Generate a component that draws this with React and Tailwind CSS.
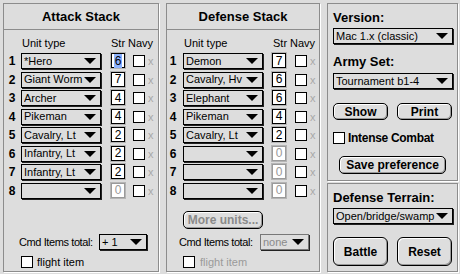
import React from 'react';

const Arrow = () => (
  <svg width="12" height="6" viewBox="0 0 12 6" className="shrink-0">
    <polygon points="0,0 12,0 6,6" fill="#000" />
  </svg>
);

const Popup = ({ label, className = '', disabled }) => (
  <div
    className={`flex items-center h-[16px] border bg-[#dddddd] shadow-[1px_1px_0_#222] pl-[2px] pr-[4px] ${
      disabled ? 'border-[#777] text-[#8a8a8a]' : 'border-black text-black'
    } ${className}`}
  >
    <span className="flex-1 whitespace-nowrap overflow-hidden text-[11px] leading-none">{label}</span>
    <Arrow />
  </div>
);

const Check = ({ className = '' }) => (
  <div className={`w-[12px] h-[12px] border border-black bg-white shrink-0 ${className}`} />
);

const StrBox = ({ v, sel, dim }) => (
  <div
    className={`w-[14px] h-[15px] border bg-white shadow-[0_0_0_1px_#b5b5b5] flex items-center justify-center text-[12px] leading-none shrink-0 ${
      dim ? 'border-[#9a9a9a] text-[#9a9a9a]' : 'border-black text-black'
    }`}
  >
    <span className={sel ? 'bg-[#8db3ff] px-[1px] py-[1px]' : ''}>{v}</span>
  </div>
);

const Btn = ({ children, className = '', disabled }) => (
  <div
    className={`flex items-center justify-center border border-black bg-[#dedede] shadow-[inset_1px_1px_0_#fff,inset_-1px_-1px_0_#999] font-bold text-[12px] leading-none ${
      disabled ? 'text-[#8a8a8a]' : 'text-black'
    } ${className}`}
  >
    {children}
  </div>
);

const attack = [
  ['*Hero', '6', true],
  ['Giant Worm', '7'],
  ['Archer', '4'],
  ['Pikeman', '4'],
  ['Cavalry, Lt', '2'],
  ['Infantry, Lt', '2'],
  ['Infantry, Lt', '2'],
  ['', '0'],
];

const defense = [
  ['Demon', '7'],
  ['Cavalry, Hv', '6'],
  ['Elephant', '6'],
  ['Pikeman', '4'],
  ['Cavalry, Lt', '2'],
  ['', '0'],
  ['', '0'],
  ['', '0'],
];

const Row = ({ n, unit, str, sel, lay }) => (
  <div className={`flex items-start h-[16px] ${lay.pl}`}>
    <span className={`${lay.num} text-center font-bold text-[12px] leading-[16px]`}>{n}</span>
    <Popup label={unit} className={`${lay.dd} w-[80px]`} />
    <div className={lay.str}>
      <StrBox v={str} sel={sel} dim={str === '0'} />
    </div>
    <Check className={`${lay.cb} mt-[2px]`} />
    <span className="ml-[3px] text-[11px] leading-[16px] text-[#a8a8a8]">x</span>
  </div>
);

const layAttack = { pl: 'pl-[1px]', num: 'w-[14px]', dd: 'ml-[2px]', str: 'ml-[10px]', cb: 'ml-[8px]' };
const layDefense = { pl: 'pl-0', num: 'w-[12px]', dd: 'ml-[4px]', str: 'ml-[9px]', cb: 'ml-[9px]' };

const Stack = ({ title, rows, lay, width, colPad, defenseSide }) => (
  <div className={`${width} h-[269px] border border-[#8c8c8c] shadow-[1px_1px_0_#fff] flex flex-col`}>
    <div className="h-[26px] flex items-center justify-center font-bold text-[13px] border-b border-[#8c8c8c]">
      {title}
    </div>
    <div className="flex-1 flex flex-col">
      <div className={`mt-[6px] h-[14px] flex items-center text-[11px] leading-none ${colPad}`}>
        <span className="w-[89px]">Unit type</span>
        <span>Str</span>
        <span className="ml-[3px]">Navy</span>
      </div>
      <div className="mt-[3px] flex flex-col gap-[2.5px]">
        {rows.map((r, i) => (
          <Row key={i} n={i + 1} unit={r[0]} str={r[1]} sel={r[2]} lay={lay} />
        ))}
      </div>
      {defenseSide ? (
        <>
          <Btn disabled className="mt-auto ml-[16px] w-[80px] h-[18px] rounded-[5px]">More units...</Btn>
          <div className="mt-[5px] flex items-center h-[16px] pl-[12px]">
            <span className="w-[81px] text-[11px] tracking-[-0.4px] leading-none">Cmd Items total:</span>
            <Popup label="none" disabled className="w-[49px]" />
          </div>
          <div className="mt-[6px] mb-[3px] flex items-center h-[12px] pl-[16px]">
            <Check />
            <span className="ml-[5px] text-[11px] leading-none text-[#9a9a9a]">flight item</span>
          </div>
        </>
      ) : (
        <>
          <div className="mt-auto flex items-center h-[16px] pl-[15px]">
            <span className="w-[80px] text-[11px] tracking-[-0.4px] leading-none">Cmd Items total:</span>
            <Popup label="+ 1" className="w-[48px]" />
          </div>
          <div className="mt-[6px] mb-[3px] flex items-center h-[12px] pl-[17px]">
            <Check />
            <span className="ml-[4px] text-[11px] leading-none">flight item</span>
          </div>
        </>
      )}
    </div>
  </div>
);

export default function App() {
  return (
    <div className="w-[460px] h-[274px] bg-[#dddddd] pt-[3px] pl-[3px] flex gap-[7px] text-black font-['Liberation_Sans',Arial,sans-serif] overflow-hidden">
      <Stack title="Attack Stack" rows={attack} lay={layAttack} width="w-[156px]" colPad="pl-[18px]" />
      <Stack title="Defense Stack" rows={defense} lay={layDefense} width="w-[154px]" colPad="pl-[17px]" defenseSide />
      <div className="w-[131px] flex flex-col">
        <div className="h-[178px] border border-[#8c8c8c] shadow-[1px_1px_0_#fff] flex flex-col px-[5px]">
          <div className="mt-[7px] h-[14px] leading-[14px] font-bold text-[13px]">Version:</div>
          <Popup label="Mac 1.x (classic)" className="mt-[3px] w-[120px]" />
          <div className="mt-[11px] h-[14px] leading-[14px] font-bold text-[13px]">Army Set:</div>
          <Popup label="Tournament b1-4" className="mt-[4px] w-[120px]" />
          <div className="mt-[14px] flex gap-[9px]">
            <Btn className="w-[56px] h-[17px] rounded-[5px]">Show</Btn>
            <Btn className="w-[56px] h-[17px] rounded-[5px]">Print</Btn>
          </div>
          <div className="mt-[12px] flex items-center h-[12px]">
            <Check />
            <span className="ml-[3px] font-bold text-[12px] tracking-[-0.3px] leading-none">Intense Combat</span>
          </div>
          <Btn className="mt-[12px] ml-[6px] w-[107px] h-[18px] rounded-[5px]">Save preference</Btn>
        </div>
        <div className="mt-[2px] h-[89px] border border-[#8c8c8c] shadow-[1px_1px_0_#fff] flex flex-col px-[5px]">
          <div className="mt-[7px] h-[14px] leading-[14px] font-bold text-[13px]">Defense Terrain:</div>
          <Popup label="Open/bridge/swamp" className="mt-[3px] w-[120px]" />
          <div className="mt-[13px] flex gap-[9px]">
            <Btn className="w-[56px] h-[29px] rounded-[6px]">Battle</Btn>
            <Btn className="w-[56px] h-[29px] rounded-[6px]">Reset</Btn>
          </div>
        </div>
      </div>
    </div>
  );
}
